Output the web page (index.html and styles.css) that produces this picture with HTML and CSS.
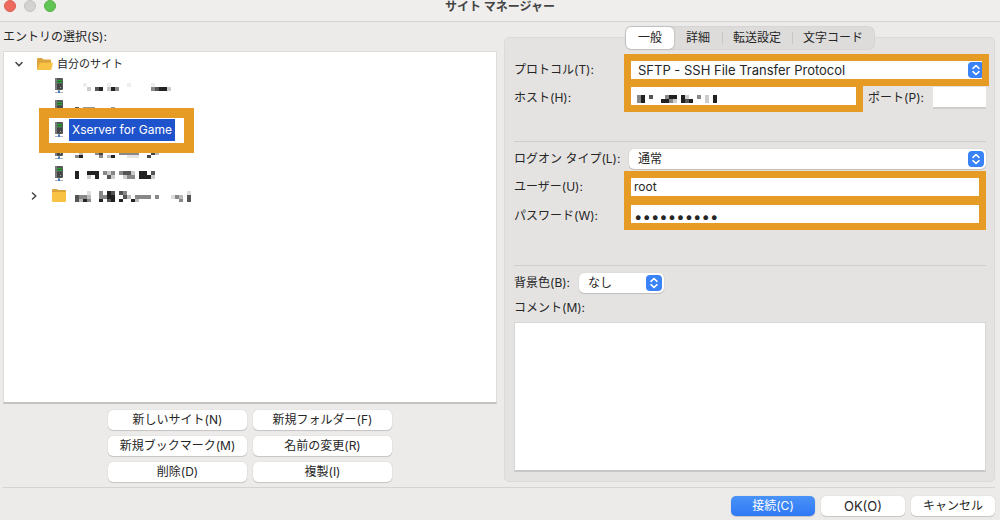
FILE: index.html
```html
<!DOCTYPE html>
<html lang="ja">
<head>
<meta charset="utf-8">
<title>サイト マネージャー</title>
<link rel="stylesheet" href="styles.css">
</head>
<body>
<svg class="defs" aria-hidden="true">
  <symbol id="server" viewBox="0 0 10 16">
    <rect x="1" y="0" width="8" height="12" rx="1" fill="#55585a"/>
    <rect x="1" y="0" width="2" height="12" fill="#77797a"/>
    <rect x="3" y="2" width="5" height="1" fill="#2f9a35"/>
    <rect x="3" y="3" width="5" height="1" fill="#2b6b2f"/>
    <rect x="3" y="4" width="5" height="1" fill="#2f9a35"/>
    <rect x="3" y="6" width="5" height="5" fill="#444647"/>
    <rect x="6" y="9" width="1" height="1" fill="#9db79b"/>
    <rect x="4" y="12" width="2" height="2" fill="#8e9aa8"/>
    <rect x="1" y="14" width="8" height="1" fill="#a9b3bd"/>
    <rect x="4" y="13" width="2" height="2" fill="#3f7fd0"/>
  </symbol>
  <symbol id="updown" viewBox="0 0 16 16">
    <rect width="16" height="16" rx="4" fill="#3a82f7"/>
    <path d="M5 6.300 8 3.500l3 2.800M5 9.700l3 2.800 3-2.800" fill="none" stroke="#fff" stroke-width="1.600" stroke-linecap="round" stroke-linejoin="round"/>
  </symbol>
</svg>
<div class="window">
  <header class="titlebar">
    <div class="lights">
      <button class="light light-close" type="button" aria-label="閉じる"></button>
      <button class="light" type="button" aria-label="しまう"></button>
      <button class="light light-zoom" type="button" aria-label="拡大"></button>
    </div>
    <h1 class="title">サイト マネージャー</h1>
  </header>

  <main class="main">
    <section class="sites">
      <h2 class="heading" id="sites-label">エントリの選択(S):</h2>
      <ul class="tree" role="tree" aria-labelledby="sites-label">
        <li class="row row-root" role="treeitem">
          <svg class="chevron" viewBox="0 0 8 8"><path d="M1 2.500 4 5.800 7 2.500" fill="none" stroke="#444" stroke-width="1.500" stroke-linecap="round" stroke-linejoin="round"/></svg>
          <svg class="folder-open" viewBox="0 0 16 14"><path d="M0 12V2q0-1 1-1h4l1.500 1.500H13q1 0 1 1V12z" fill="#dca53c"/><path d="M0 13 2.500 6.500q.3-.7 1-.7H15q1 0 .8.900L14.500 12q-.3 1-1.300 1z" fill="#f8c244"/></svg>
          <span class="root-name">自分のサイト</span>
        </li>
        <li class="row" role="treeitem">
          <svg class="icon" viewBox="0 0 10 16"><use href="#server"/></svg>
          <svg class="mosaic" viewBox="0 -.75 29 3" shape-rendering="crispEdges">
            <path fill="#eee" d="M2 0h1v1h-1zM8 0h1v1h-1zM13 0h1v1h-1zM19 0h1v1h-1z"/>
            <path fill="#ccc" d="M3 1h1v1h-1zM8 1h1v1h-1zM23 1h1v1h-1z"/>
            <path fill="#888" d="M10 1h1v1h-1zM19 1h1v1h-1z"/>
            <path fill="#555" d="M5 1h1v1h-1zM20 1h1v1h-1z"/>
            <path fill="#222" d="M6 1h1v1h-1zM9 1h1v1h-1zM21 1h2v1h-2z"/>
          </svg>
        </li>
        <li class="row" role="treeitem">
          <svg class="icon" viewBox="0 0 10 16"><use href="#server"/></svg>
          <svg class="mosaic" viewBox="0 -.75 29 3" shape-rendering="crispEdges">
            <path fill="#999" d="M2 .5h3v1h-3zM9 .5h1v1h-1z"/>
            <path fill="#555" d="M0 .5h1v1h-1z"/>
          </svg>
        </li>
        <li class="row" role="treeitem" aria-selected="true">
          <svg class="icon" viewBox="0 0 10 16"><use href="#server"/></svg>
          <span class="selected">Xserver for Game</span>
          <span class="mark mark-entry"></span>
        </li>
        <li class="row" role="treeitem">
          <svg class="icon" viewBox="0 0 10 16"><use href="#server"/></svg>
          <svg class="mosaic" viewBox="0 -.25 29 3" shape-rendering="crispEdges">
            <path fill="#bbb" d="M1 1h1v1h-1zM20 1h1v1h-1zM8 2h1v1h-1z"/>
            <path fill="#e4e4e4" d="M13 2h3v1h-3z"/>
            <path fill="#888" d="M5 1h1v1h-1zM0 2h1v1h-1zM6 2h1v1h-1zM11 1h5v1h-5z"/>
            <path fill="#444" d="M6 1h1v1h-1zM19 1h1v1h-1zM18 2h1v1h-1z"/>
            <path fill="#222" d="M1 2h1v1h-1zM9 2h1v1h-1z"/>
          </svg>
        </li>
        <li class="row" role="treeitem">
          <svg class="icon" viewBox="0 0 10 16"><use href="#server"/></svg>
          <svg class="mosaic" viewBox="0 -.25 29 3" shape-rendering="crispEdges">
            <path fill="#ccc" d="M8 .5h1v1h-1zM14 .5h1v1h-1zM3 1.500h1v1h-1zM9 1.500h1v1h-1zM12 1.500h1v1h-1zM19 1.500h1v1h-1z"/>
            <path fill="#888" d="M7 .5h1v1h-1zM9 .5h1v1h-1zM11 .5h1v1h-1zM13 1.500h2v1h-2z"/>
            <path fill="#555" d="M12 .5h2v1h-2zM19 .5h1v1h-1zM8 1.500h1v1h-1z"/>
            <path fill="#222" d="M0 .5h1v2h-1zM3 .5h3v1h-3zM5 1.500h1v1h-1zM16 .5h2v1h-2zM16 1.500h3v1h-3z"/>
          </svg>
        </li>
        <li class="row row-folder" role="treeitem">
          <svg class="chevron" viewBox="0 0 8 8"><path d="M2.500 1 5.800 4 2.500 7" fill="none" stroke="#444" stroke-width="1.500" stroke-linecap="round" stroke-linejoin="round"/></svg>
          <svg class="icon" viewBox="0 0 14 14"><path d="M0 1q0-1 1-1h4l1 1h7q1 0 1 1v3H0z" fill="#dca53c"/><path d="M0 3h14v9q0 1-1 1H1q-1 0-1-1z" fill="#f8c244"/></svg>
          <svg class="mosaic" viewBox="0 -.25 29 3" shape-rendering="crispEdges">
            <path fill="#ddd" d="M3 0h1v1h-1zM24 1h1v1h-1zM28 0h1v1h-1z"/>
            <path fill="#bbb" d="M3 1h1v1h-1zM13 1h1v1h-1zM26 1h1v1h-1zM15 2h1v1h-1zM1 2h1v1h-1z"/>
            <path fill="#888" d="M6 0h1v1h-1zM12 0h1v1h-1zM1 1h2v1h-2zM6 1h2v1h-2zM15 1h4v1h-4zM20 1h1v1h-1zM25 1h1v1h-1zM3 2h1v1h-1zM26 2h1v1h-1z"/>
            <path fill="#555" d="M9 0h1v1h-1zM11 0h1v1h-1zM0 1h1v2h-1zM12 1h1v1h-1zM28 1h1v2h-1zM8 2h1v1h-1z"/>
            <path fill="#222" d="M8 0h1v2h-1zM9 1h1v2h-1zM2 2h1v1h-1zM6 2h1v1h-1zM11 2h1v1h-1zM14 2h1v1h-1z"/>
          </svg>
        </li>
      </ul>
      <div class="actions">
        <button class="button" type="button">新しいサイト(N)</button>
        <button class="button" type="button">新規フォルダー(F)</button>
        <button class="button" type="button">新規ブックマーク(M)</button>
        <button class="button" type="button">名前の変更(R)</button>
        <button class="button" type="button">削除(D)</button>
        <button class="button" type="button">複製(I)</button>
      </div>
    </section>

    <form class="panel" id="site-form">
      <div class="tabs" role="tablist">
        <button class="tab tab-active" type="button" role="tab" aria-selected="true">一般</button>
        <button class="tab" type="button" role="tab">詳細</button>
        <button class="tab tab-divided" type="button" role="tab">転送設定</button>
        <button class="tab tab-divided" type="button" role="tab">文字コード</button>
      </div>
      <div class="fields">
        <label for="protocol">プロトコル(T):</label>
        <div class="control">
          <select class="select select-latin" id="protocol"><option>SFTP - SSH File Transfer Protocol</option></select>
          <svg class="updown" viewBox="0 0 16 16"><use href="#updown"/></svg>
          <span class="mark mark-protocol"></span>
        </div>
        <label for="host">ホスト(H):</label>
        <div class="host">
          <div class="control">
            <input class="input" id="host" type="text">
            <svg class="host-mosaic" viewBox="0 0 20 2" shape-rendering="crispEdges">
              <path fill="#ccc" d="M12 0h1v1h-1zM17 0h1v2h-1zM9 1h1v1h-1z"/>
              <path fill="#888" d="M0 0h1v2h-1zM7 0h1v1h-1zM15 0h1v1h-1zM8 1h1v1h-1z"/>
              <path fill="#555" d="M3 0h1v1h-1zM12 1h1v1h-1z"/>
              <path fill="#222" d="M1 0h1v2h-1zM8 0h2v1h-2zM11 0h1v2h-1zM19 0h1v2h-1zM6 1h2v1h-2zM13 1h1v1h-1z"/>
            </svg>
            <span class="mark mark-host"></span>
          </div>
          <label for="port">ポート(P):</label>
          <input class="input" id="port" type="text">
        </div>
      </div>
      <hr class="rule rule-host">
      <div class="fields fields-logon">
        <label for="logon">ログオン タイプ(L):</label>
        <div class="control">
          <select class="select" id="logon"><option>通常</option></select>
          <svg class="updown" viewBox="0 0 16 16"><use href="#updown"/></svg>
        </div>
        <label for="user">ユーザー(U):</label>
        <div class="control">
          <input class="input" id="user" type="text" value="root">
          <span class="mark mark-user"></span>
        </div>
        <label for="password">パスワード(W):</label>
        <div class="control">
          <input class="input password" id="password" type="password" value="xxxxxxxxxx">
          <span class="mark mark-password"></span>
        </div>
      </div>
      <hr class="rule rule-logon">
      <div class="color">
        <label for="color">背景色(B):</label>
        <div class="control">
          <select class="select" id="color"><option>なし</option></select>
          <svg class="updown" viewBox="0 0 16 16"><use href="#updown"/></svg>
        </div>
      </div>
      <label class="comment-label" for="comment">コメント(M):</label>
      <textarea class="comment" id="comment"></textarea>
    </form>
  </main>

  <footer class="footer">
    <button class="button button-primary" type="submit" form="site-form">接続(C)</button>
    <button class="button button-latin" type="button">OK(O)</button>
    <button class="button" type="button">キャンセル</button>
  </footer>
</div>
</body>
</html>
```

FILE: styles.css
```css
* {
  box-sizing: border-box;
}

body {
  margin: 0;
  background: #ecebea;
  color: #262626;
}

body,
button,
input,
select,
textarea {
  font: 12px/20px Inter, "Noto Sans CJK JP", sans-serif;
}

.defs {
  position: absolute;
  width: 0;
  height: 0;
}

.window {
  display: flex;
  flex-direction: column;
  min-height: 100vh;
}

/* Title bar */
.titlebar {
  display: grid;
  grid-template-columns: 1fr auto 1fr;
  height: 22px;
  padding: 0 4px;
  border-bottom: 1px solid #d4d3d2;
  background: #efeeec;
}

.lights {
  display: flex;
  gap: 8px;
}

.light {
  width: 12px;
  height: 12px;
  padding: 0;
  border: 1px solid #c4c3c2;
  border-radius: 50%;
  background: #d3d2d1;
}

.light-close {
  border-color: #dc5b51;
  background: #ed6a5f;
}

.light-zoom {
  border-color: #55b046;
  background: #61c554;
}

.title {
  margin: 0;
  color: #444;
  font-size: 12px;
  line-height: 14px;
  font-weight: 700;
}

.main {
  display: grid;
  flex: 1;
  grid-template-columns: 494fr 491fr;
  gap: 7px;
  padding: 0 5px 5px 3px;
}

/* Site tree */
.sites {
  display: flex;
  flex-direction: column;
}

.heading {
  margin: 0;
  font-size: 12px;
  line-height: 29px;
  font-weight: 400;
}

.tree {
  flex: 1;
  margin: 0;
  padding: 1px 0;
  border: 1px solid #dddcdb;
  border-bottom: 2px solid #c4c4c4;
  background: #fff;
  list-style: none;
}

.row {
  position: relative;
  display: flex;
  align-items: center;
  height: 22px;
  padding-left: 48px;
}

.row-root {
  padding-left: 11px;
}

.row-folder {
  padding-left: 26px;
}

.chevron {
  width: 8px;
  height: 8px;
  margin-right: 14px;
}

.icon {
  width: 14px;
  height: 16px;
}

.folder-open {
  width: 16px;
  height: 14px;
}

.root-name {
  margin-left: 4px;
  font-size: 11px;
}

.mosaic {
  width: 116px;
  height: 12px;
  margin-left: 9px;
}

.selected {
  margin-left: 3px;
  padding: 0 3px;
  background: #1f53cb;
  color: #fff;
  line-height: 22px;
}

.actions {
  display: grid;
  grid-template-columns: 139px 139px;
  justify-content: center;
  gap: 6px;
  padding-top: 6px;
}

.button {
  height: 20px;
  padding: 0 8px;
  border: 0;
  border-radius: 5px;
  background: #fff;
  box-shadow: 0 0 1px #00000033, 0 1px 1px #00000026;
  color: #262626;
  white-space: nowrap;
}

.button-latin {
  font-size: 13px;
}

/* Settings panel */
.panel {
  display: flex;
  flex-direction: column;
  margin-top: 15px;
  padding: 0 8px 9px 9px;
  border: 1px solid #dbdad9;
  border-radius: 5px;
  background: #e4e3e2;
}

.tabs {
  display: flex;
  align-self: center;
  height: 22px;
  margin-top: -11px;
  border-radius: 6px;
  background: #dddcdb;
  box-shadow: 0 0 0 1px #d6d5d4;
}

.tab {
  padding: 0 12px;
  border: 0;
  border-radius: 5px;
  background: none;
  color: #262626;
}

.tab-active {
  background: #fff;
  box-shadow: 0 0 2px #00000059;
}

.tab-divided {
  padding: 0 11px;
  background: linear-gradient(#c8c7c6, #c8c7c6) left center / 1px 12px no-repeat;
}

.fields {
  display: grid;
  grid-template-columns: 115px 1fr;
  align-items: center;
  row-gap: 7px;
  padding-top: 11px;
}

.fields-logon {
  padding-top: 7px;
}

.control {
  position: relative;
  display: grid;
}

.host {
  display: grid;
  grid-template-columns: 1fr auto 53px;
  align-items: center;
  gap: 9px;
}

.input {
  width: 100%;
  height: 22px;
  padding: 0 5px;
  border: 0;
  border-bottom: 2px solid #cfcecd;
  background: #fff;
  color: #262626;
  outline: 0;
}

.password {
  padding-top: 2px;
  font-size: 15px;
}

.select {
  width: 100%;
  height: 20px;
  padding: 0 24px 0 9px;
  border: 0;
  border-radius: 5px;
  background: #fff;
  box-shadow: 0 0 1px #00000033, 0 1px 1px #00000026;
  color: #262626;
  appearance: none;
}

.select-latin {
  font-size: 13px;
}

.updown {
  position: absolute;
  top: 2px;
  right: 2px;
  width: 16px;
  height: 16px;
  pointer-events: none;
}

.host-mosaic {
  position: absolute;
  top: 8px;
  left: 8px;
  width: 80px;
  height: 8px;
  pointer-events: none;
}

.rule {
  width: 100%;
  margin: 0;
  border: 0;
  border-top: 1px solid #cfcecd;
}

.rule-host {
  margin-top: 32px;
}

.rule-logon {
  margin-top: 38px;
}

.color {
  display: flex;
  gap: 9px;
  padding-top: 7px;
}

.color .control {
  width: 85px;
}

.comment-label {
  padding: 5px 0 4px;
}

.comment {
  flex: 1;
  width: 100%;
  min-height: 60px;
  padding: 4px;
  border: 1px solid #d8d7d6;
  border-bottom: 2px solid #c8c8c8;
  background: #fff;
  outline: 0;
  resize: none;
}

/* Orange frames drawn over the fields they point out */
.mark {
  position: absolute;
  z-index: 1;
  border: 7px solid #e69b25;
  pointer-events: none;
}

.mark-entry {
  top: -11px;
  left: 35px;
  width: 155px;
  height: 45px;
  border-width: 10px;
}

.mark-protocol {
  inset: -6px -3px -6px -5px;
}

.mark-host {
  inset: -7px -4px -3px -5px;
}

.mark-user {
  inset: -5px 0 -5px -5px;
}

.mark-password {
  inset: -7px 0 -3px -5px;
}

/* Footer */
.footer {
  display: flex;
  justify-content: flex-end;
  gap: 6px;
  margin: 0 5px 0 3px;
  padding: 8px 0 4px;
  border-top: 1px solid #d4d3d2;
}

.footer .button {
  width: 84px;
}

.footer .button-primary {
  background: linear-gradient(#4a93f8, #2f78f5);
  color: #fff;
}
```
